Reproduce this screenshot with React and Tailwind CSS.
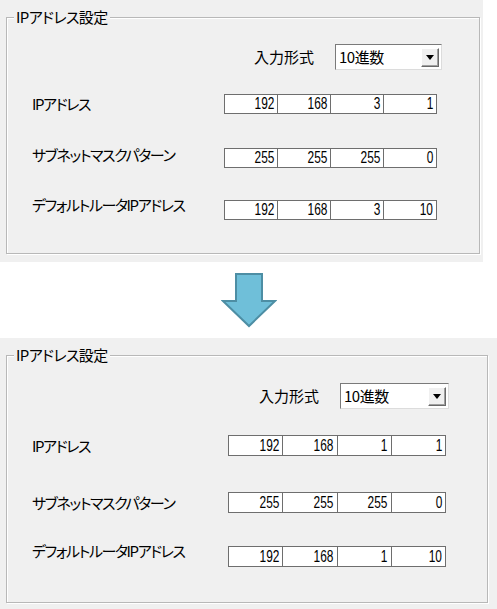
const JP = "font-['Noto_Sans_CJK_JP',sans-serif] [font-feature-settings:'palt'] text-[15px] leading-[16px] text-black";
const NUM = "font-['Liberation_Sans',sans-serif] text-[17px] leading-[16px] text-black";

function IpField({ values, className }) {
    return (
        <div className={`flex border border-[#6e6e6e] bg-white ${className}`}>
            {values.map((v, i) => (
                <div key={i} className={`flex flex-1 items-center justify-end pr-[3px] ${i > 0 ? "border-l border-[#6e6e6e]" : ""}`}>
                    {/* narrow digits */}
                    <span className={`inline-block origin-right scale-x-[0.7] ${NUM}`}>{v}</span>
                </div>
            ))}
        </div>
    );
}

function Combo({ className }) {
    return (
        <div className={`flex items-center justify-between border border-t-[#7a7a7a] border-l-[#7a7a7a] border-r-[#dcdcdc] border-b-[#dcdcdc] bg-white pl-[3px] pr-[2px] ${className}`}>
            <span className={`${JP} tracking-[-0.5px]`}>10進数</span>
            {/* drop button */}
            <span className="flex h-[19px] w-[18px] items-center justify-center border border-t-white border-l-white border-r-[#696969] border-b-[#696969] bg-[#f0f0f0] shadow-[inset_-1px_-1px_0_#a0a0a0]">
                <svg width="8" height="5" viewBox="0 0 8 5">
                    <path d="M0 0 H8 L4 5 Z" fill="#000" />
                </svg>
            </span>
        </div>
    );
}

function Panel({ ip, s }) {
    return (
        <div className={`bg-[#f0f0f0] pl-[6px] pt-[17px] ${s.outer}`}>
            {/* group box */}
            <div className={`relative border border-[#b8b8b8] shadow-[inset_1px_1px_0_#fff,1px_1px_0_#fff] ${s.box}`}>
                <span className={`absolute -top-[9px] left-[7px] bg-[#f0f0f0] px-[2px] tracking-[-0.6px] ${JP}`}>IPアドレス設定</span>

                {/* 入力形式 */}
                <div className={`flex items-center justify-end gap-[21px] ${s.combo}`}>
                    <span className={JP}>入力形式</span>
                    <Combo className={s.comboBox} />
                </div>

                {/* rows */}
                {[
                    { label: "IPアドレス", values: ip, mt: s.r1, lab: "" },
                    { label: "サブネットマスクパターン", values: ["255", "255", "255", "0"], mt: s.r2, lab: s.l2 },
                    { label: "デフォルトルータIPアドレス", values: [ip[0], ip[1], ip[2], "10"], mt: s.r3, lab: s.l3 },
                ].map((row, i) => (
                    <div key={i} className={`flex items-center pl-[25px] ${row.mt}`}>
                        <span className={`${JP} tracking-[-1.4px] ${s.labelW} ${row.lab}`}>{row.label}</span>
                        <IpField values={row.values} className={s.field} />
                    </div>
                ))}
            </div>
        </div>
    );
}

export default function App() {
    const top = {
        outer: "w-[483px] h-[262px]",
        box: "w-[474px] h-[237px]",
        combo: "mt-[26px] pr-[37px]",
        comboBox: "w-[107px] h-[26px]",
        r1: "mt-[24px]",
        r2: "mt-[34px]",
        r3: "mt-[32px]",
        l2: "-mt-[6px]",
        l3: "-mt-[10px]",
        labelW: "w-[192px]",
        field: "w-[213px] h-[20px]",
    };
    const bottom = {
        outer: "w-[497px] h-[271px]",
        box: "w-[482px] h-[248px]",
        combo: "mt-[27px] pr-[38px]",
        comboBox: "w-[109px] h-[26px]",
        r1: "mt-[26px]",
        r2: "mt-[36px]",
        r3: "mt-[33px]",
        l2: "",
        l3: "-mt-[12px]",
        labelW: "w-[196px]",
        field: "w-[218px] h-[21px]",
    };

    return (
        <div className="w-[497px] h-[609px] bg-white">
            <Panel ip={["192", "168", "3", "1"]} s={top} />

            {/* arrow */}
            <div className="flex h-[76px] items-start justify-center pt-[10px]">
                <svg width="56" height="56" viewBox="0 0 56 56">
                    <path d="M15 2 H41 V29 H54 L28 54 L2 29 H15 Z" fill="#6fbfd9" stroke="#4d8ea4" strokeWidth="2" strokeLinejoin="miter" />
                </svg>
            </div>

            <Panel ip={["192", "168", "1", "1"]} s={bottom} />
        </div>
    );
}
